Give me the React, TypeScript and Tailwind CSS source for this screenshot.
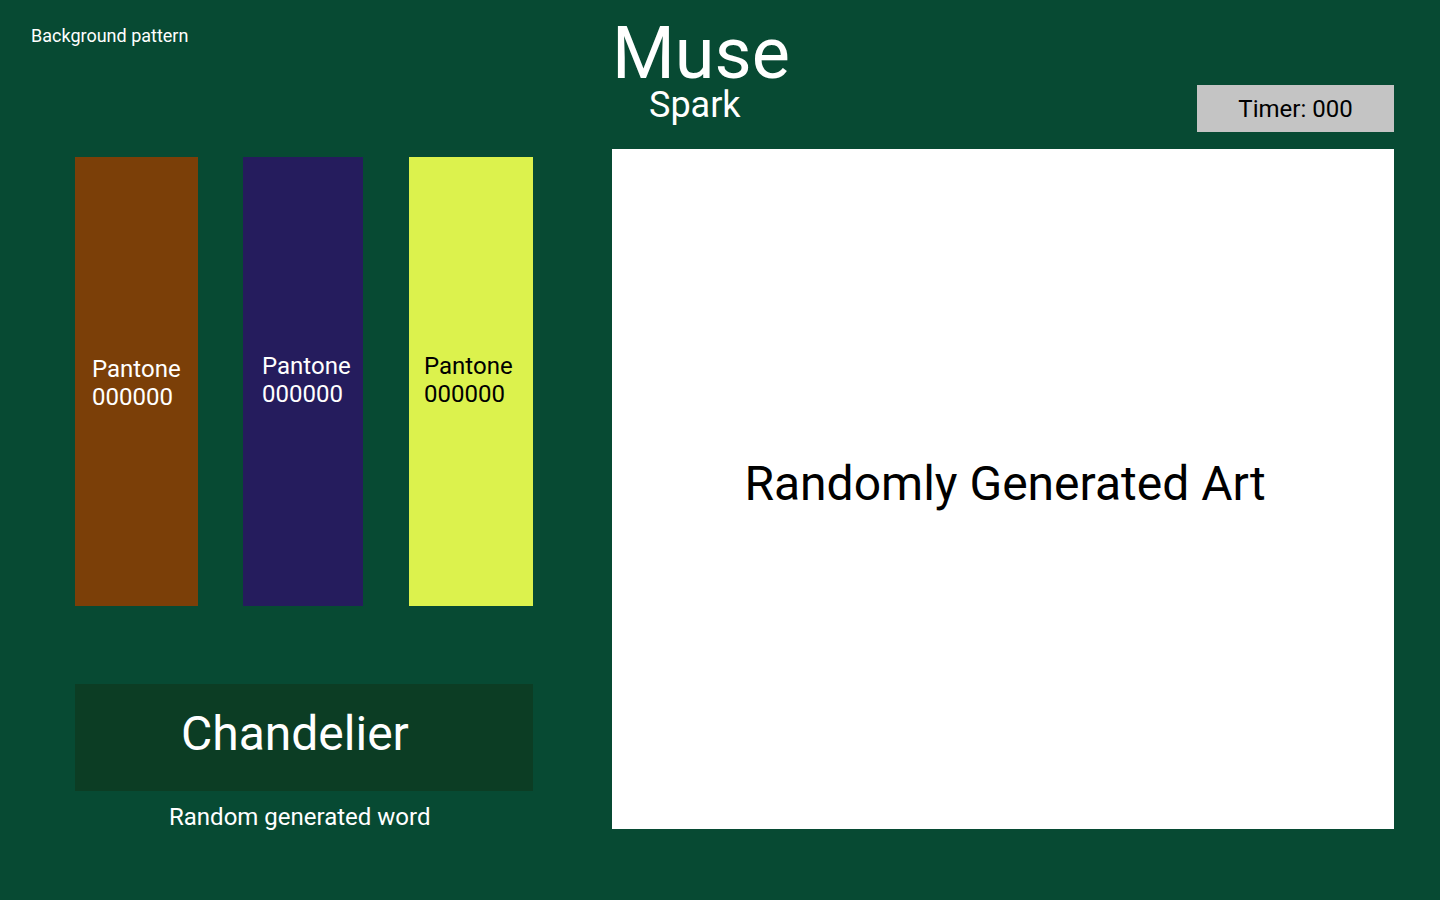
const swatches = [
  { bg: "bg-[#7b3f08]", text: "text-white", w: "w-[123px]", pad: "pl-[17px] pt-[3px]", ml: "" },
  { bg: "bg-[#251c5d]", text: "text-white", w: "w-[120px]", pad: "pl-[19px] pb-[3px]", ml: "ml-[45px]" },
  { bg: "bg-[#dcf24d]", text: "text-black", w: "w-[124px]", pad: "pl-[15px] pb-[3px]", ml: "ml-[46px]" }
]

function Swatch({ bg, text, w, pad, ml }: { bg: string; text: string; w: string; pad: string; ml: string }) {
  return (
    <div className={`${bg} ${text} ${w} ${pad} ${ml} flex h-[449px] flex-col justify-center text-[24px] leading-[28px]`}>
      <span>Pantone</span>
      <span>000000</span>
    </div>
  )
}

export default function App() {
  return (
    <div
      className="h-[900px] w-[1440px] bg-[#074a33] text-white"
      style={{ fontFamily: "Roboto, 'Noto Sans', sans-serif" }}
    >
      {/* Header */}
      <div className="flex h-[149px]">
        <div className="w-[612px] pl-[31px] pt-[24px] text-[18px] leading-[24px]">
          Background pattern
        </div>
        <div className="flex w-[782px] justify-between">
          <div className="pt-[19px]">
            <div className="text-[72px] leading-[69px]">Muse</div>
            <div className="pl-[37px] text-[36px] leading-[34px]">Spark</div>
          </div>
          <div className="mt-[85px] flex h-[47px] w-[197px] items-center justify-center bg-[#c4c4c4] text-[24px] text-black">
            Timer: 000
          </div>
        </div>
      </div>

      {/* Main */}
      <div className="flex">
        <div className="w-[612px] pl-[75px] pt-[8px]">
          <div className="flex">
            {swatches.map((s, i) => (
              <Swatch key={i} {...s} />
            ))}
          </div>
          <div className="mt-[78px] h-[107px] w-[458px] bg-[#0c3d24] pl-[106px] pt-[26px] text-[48px] leading-[48px]">
            Chandelier
          </div>
          <div className="mt-[10px] pl-[94px] text-[24px] leading-[32px]">
            Random generated word
          </div>
        </div>
        <div className="flex h-[680px] w-[782px] items-center justify-center bg-white pb-[10px] pl-[4px] text-[48px] leading-[48px] text-black">
          Randomly Generated Art
        </div>
      </div>
    </div>
  )
}
